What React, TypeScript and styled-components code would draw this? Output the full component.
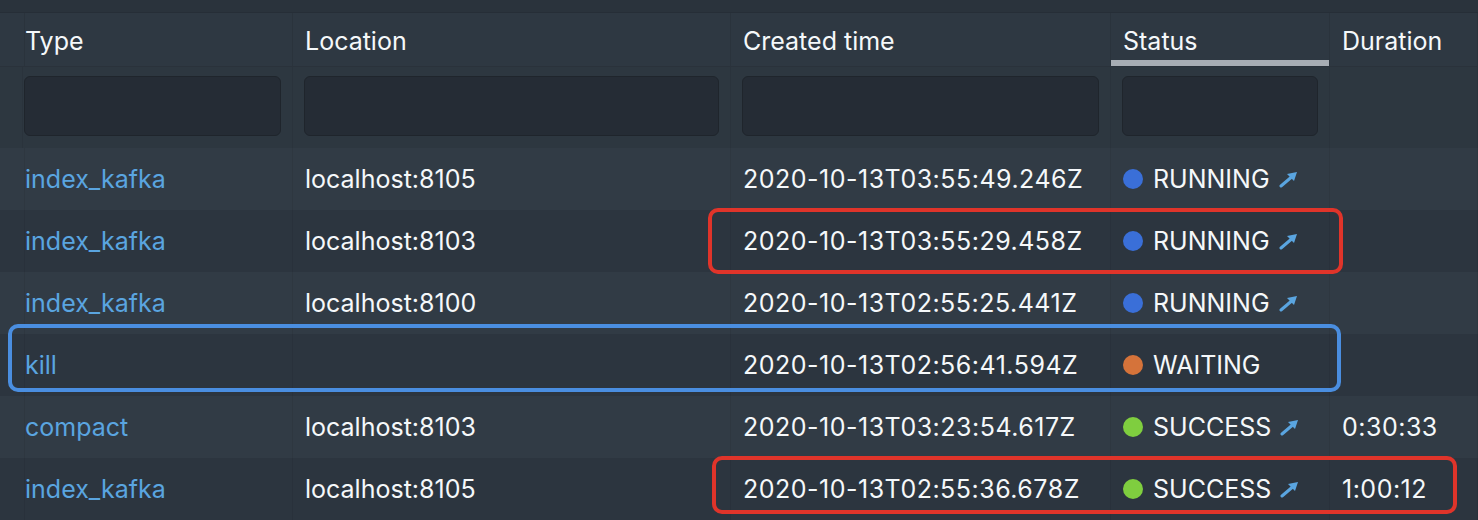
import React from 'react';
import styled, { createGlobalStyle } from 'styled-components';

const GlobalStyle = createGlobalStyle`
  html, body {
    margin: 0;
    padding: 0;
    background: #2c353f;
    overflow: hidden;
  }
  * { box-sizing: border-box; }
`;

const COLS = '13px 280px 438px 380px 219px 1fr';

type Task = {
  type: string
  location: string
  created: string
  status: 'RUNNING' | 'WAITING' | 'SUCCESS'
  duration: string
}

const tasks: Task[] = [
  { type: 'index_kafka', location: 'localhost:8105', created: '2020-10-13T03:55:49.246Z', status: 'RUNNING', duration: '' },
  { type: 'index_kafka', location: 'localhost:8103', created: '2020-10-13T03:55:29.458Z', status: 'RUNNING', duration: '' },
  { type: 'index_kafka', location: 'localhost:8100', created: '2020-10-13T02:55:25.441Z', status: 'RUNNING', duration: '' },
  { type: 'kill', location: '', created: '2020-10-13T02:56:41.594Z', status: 'WAITING', duration: '' },
  { type: 'compact', location: 'localhost:8103', created: '2020-10-13T03:23:54.617Z', status: 'SUCCESS', duration: '0:30:33' },
  { type: 'index_kafka', location: 'localhost:8105', created: '2020-10-13T02:55:36.678Z', status: 'SUCCESS', duration: '1:00:12' },
];

const dotColors: Record<string, string> = {
  RUNNING: '#3a6fd8',
  WAITING: '#d5733a',
  SUCCESS: '#7fce3f',
};

const Page = styled.div`
  position: relative;
  width: 1478px;
  height: 520px;
  font-family: Inter, "Noto Sans", Roboto, sans-serif;
  font-size: 25px;
  color: #f5f8fa;
  overflow: hidden;
`;

const TopStrip = styled.div`
  height: 13px;
  background: #2a333c;
  border-bottom: 1px solid #262e37;
`;

const HeaderRow = styled.div`
  display: grid;
  grid-template-columns: ${COLS};
  height: 53px;
  background: #2e3842;
`;

const HeaderCell = styled.div<{ sorted?: boolean }>`
  display: flex;
  align-items: center;
  padding: 2px 12px 0;
  border-right: 1px solid #2a333c;
  box-shadow: ${p => (p.sorted ? 'inset 0 -6px 0 #a7adb4' : 'none')};
`;

const FilterRow = styled.div`
  display: grid;
  grid-template-columns: ${COLS};
  height: 82px;
  background: #2d3740;
  border-top: 1px solid #2a323b;
`;

const FilterCell = styled.div`
  display: flex;
  align-items: center;
  padding: 0 11px 3px;
  border-right: 1px solid #2a333c;
`;

const FilterInput = styled.div<{ bleed?: boolean }>`
  width: 100%;
  height: 60px;
  background: #252c35;
  border: 1px solid #1f252c;
  border-radius: 6px;
  margin-left: ${p => (p.bleed ? '-22px' : '0')};
`;

const Row = styled.div<{ odd: boolean }>`
  display: grid;
  grid-template-columns: ${COLS};
  height: 62px;
  background: ${p => (p.odd ? '#313b45' : '#2c353f')};
`;

const Cell = styled.div<{ spaced?: boolean }>`
  display: flex;
  align-items: center;
  padding: 0 12px;
  white-space: nowrap;
  letter-spacing: ${p => (p.spaced ? '0.5px' : 'normal')};
  border-right: 1px solid rgba(0, 0, 0, 0.06);
`;

const TypeLink = styled.span`
  color: #5aa5e0;
`;

const Dot = styled.span<{ color: string }>`
  width: 20px;
  height: 20px;
  border-radius: 50%;
  background: ${p => p.color};
  margin-right: 10px;
  flex-shrink: 0;
`;

const ArrowIcon = styled.svg`
  margin-left: 9px;
  flex-shrink: 0;
`;

const Highlight = styled.div<{ color: string }>`
  position: absolute;
  border: 4px solid ${p => p.color};
  border-radius: 10px;
  pointer-events: none;
`;

const Arrow = () => (
  <ArrowIcon width="20" height="20" viewBox="0 0 20 20">
    <line x1="2" y1="17" x2="12" y2="8.5" stroke="#5aa5e0" strokeWidth="3" strokeLinecap="round" />
    <polygon points="18,3 8,5 15,12" fill="#5aa5e0" />
  </ArrowIcon>
);

const App: React.FC = () => {
  return (
    <Page>
      <GlobalStyle />
      <TopStrip />
      <HeaderRow>
        <HeaderCell />
        <HeaderCell>Type</HeaderCell>
        <HeaderCell>Location</HeaderCell>
        <HeaderCell>Created time</HeaderCell>
        <HeaderCell sorted>Status</HeaderCell>
        <HeaderCell>Duration</HeaderCell>
      </HeaderRow>
      <FilterRow>
        <FilterCell><FilterInput bleed /></FilterCell>
        <FilterCell><FilterInput /></FilterCell>
        <FilterCell><FilterInput /></FilterCell>
        <FilterCell><FilterInput /></FilterCell>
        <FilterCell><FilterInput /></FilterCell>
        <FilterCell />
      </FilterRow>
      {tasks.map((task, index) => (
        <Row key={index} odd={index % 2 === 0}>
          <Cell />
          <Cell><TypeLink>{task.type}</TypeLink></Cell>
          <Cell>{task.location}</Cell>
          <Cell spaced>{task.created}</Cell>
          <Cell>
            <Dot color={dotColors[task.status]} />
            {task.status}
            {task.status !== 'WAITING' && <Arrow />}
          </Cell>
          <Cell spaced>{task.duration}</Cell>
        </Row>
      ))}
      <Highlight color="#e0342a" style={{ left: 708, top: 208, width: 635, height: 66 }} />
      <Highlight color="#4a8ee0" style={{ left: 8, top: 324, width: 1333, height: 68 }} />
      <Highlight color="#e0342a" style={{ left: 712, top: 456, width: 745, height: 58 }} />
    </Page>
  );
};

export default App;
